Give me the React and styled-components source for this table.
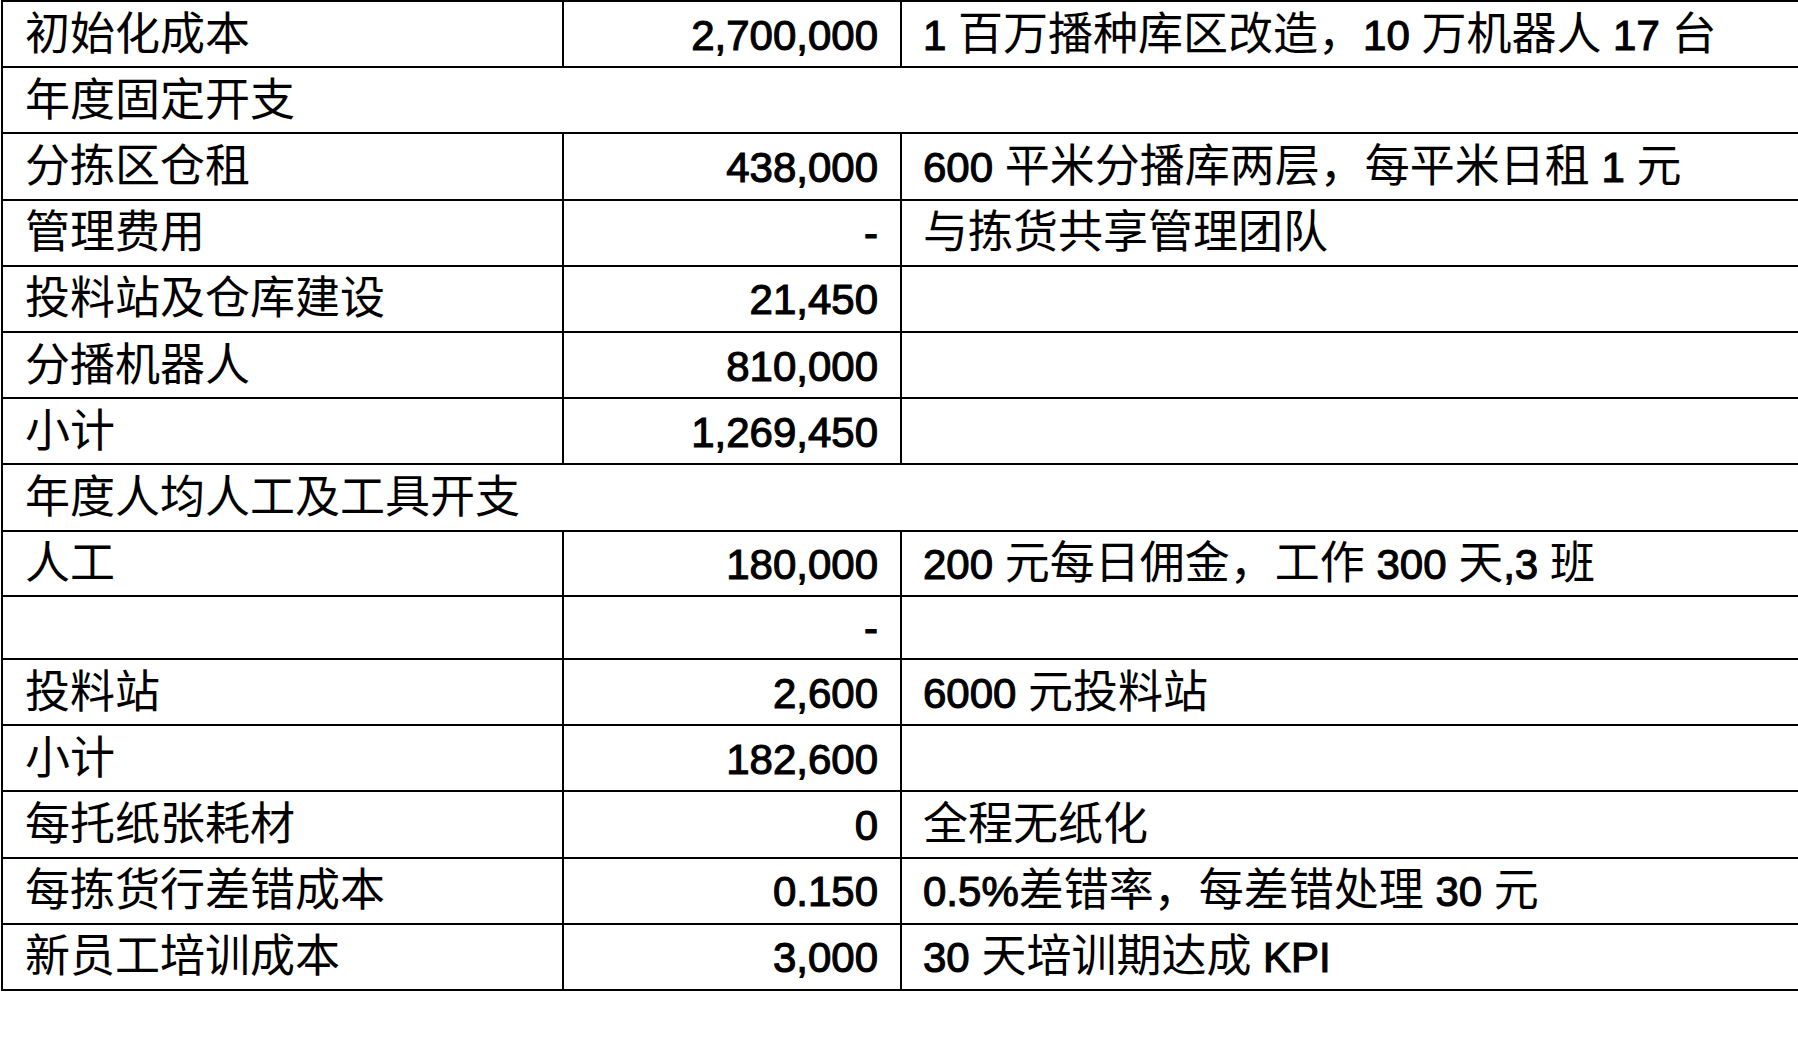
import React from 'react'
import styled, { createGlobalStyle } from 'styled-components'

const GlobalStyle = createGlobalStyle`
  html, body {
    margin: 0;
    padding: 0;
    background: #ffffff;
    overflow: hidden;
  }
  body {
    font-family: "Liberation Sans", "Noto Sans CJK SC", sans-serif;
    color: #000;
  }
`

const rows = [
  { name: '初始化成本', amount: '2,700,000', note: '1 百万播种库区改造，10 万机器人 17 台' },
  { section: '年度固定开支' },
  { name: '分拣区仓租', amount: '438,000', note: '600 平米分播库两层，每平米日租 1 元' },
  { name: '管理费用', amount: '-', note: '与拣货共享管理团队' },
  { name: '投料站及仓库建设', amount: '21,450', note: '' },
  { name: '分播机器人', amount: '810,000', note: '' },
  { name: '小计', amount: '1,269,450', note: '' },
  { section: '年度人均人工及工具开支' },
  { name: '人工', amount: '180,000', note: '200 元每日佣金，工作 300 天,3 班', h: 65 },
  { name: '', amount: '-', note: '', h: 63.5 },
  { name: '投料站', amount: '2,600', note: '6000 元投料站' },
  { name: '小计', amount: '182,600', note: '' },
  { name: '每托纸张耗材', amount: '0', note: '全程无纸化' },
  { name: '每拣货行差错成本', amount: '0.150', note: '0.5%差错率，每差错处理 30 元' },
  { name: '新员工培训成本', amount: '3,000', note: '30 天培训期达成 KPI' },
]

const Sheet = styled.table`
  border-collapse: collapse;
  table-layout: fixed;
  width: 1960px;
  margin: 0 0 0 1px;
  border: 2px solid #000;
`

const Row = styled.tr`
  height: ${p => p.$h || 66.2}px;
`

const Cell = styled.td`
  border: 2px solid #000;
  padding: 0 ${p => (p.$align === 'right' ? '22px' : '0')} 0 ${p => (p.$align === 'right' ? '0' : p.$indent || '22px')};
  text-align: ${p => p.$align || 'left'};
  font-size: 45px;
  line-height: 1;
  white-space: nowrap;
  overflow: hidden;
  vertical-align: middle;
`

// digits and latin letters: a medium weight, slightly smaller face
const Latin = styled.span`
  font-family: "Liberation Sans", sans-serif;
  font-weight: 400;
  font-size: 42px;
  -webkit-text-stroke: 1.1px #000;
`

const Mixed = ({ text }) =>
  text.split(/([\x20-\x7E]+)/).map((part, i) =>
    i % 2 ? <Latin key={i}>{part}</Latin> : part
  )

export default function App() {
  return (
    <>
      <GlobalStyle />
      <Sheet>
        <colgroup>
          <col style={{ width: 561 }} />
          <col style={{ width: 338 }} />
          <col />
        </colgroup>
        <tbody>
          {rows.map((r, i) =>
            r.section ? (
              <Row key={i}>
                <Cell colSpan={3}>{r.section}</Cell>
              </Row>
            ) : (
              <Row key={i} $h={r.h}>
                <Cell>{r.name}</Cell>
                <Cell $align="right"><Mixed text={r.amount} /></Cell>
                <Cell $indent="21px"><Mixed text={r.note} /></Cell>
              </Row>
            )
          )}
        </tbody>
      </Sheet>
    </>
  )
}
